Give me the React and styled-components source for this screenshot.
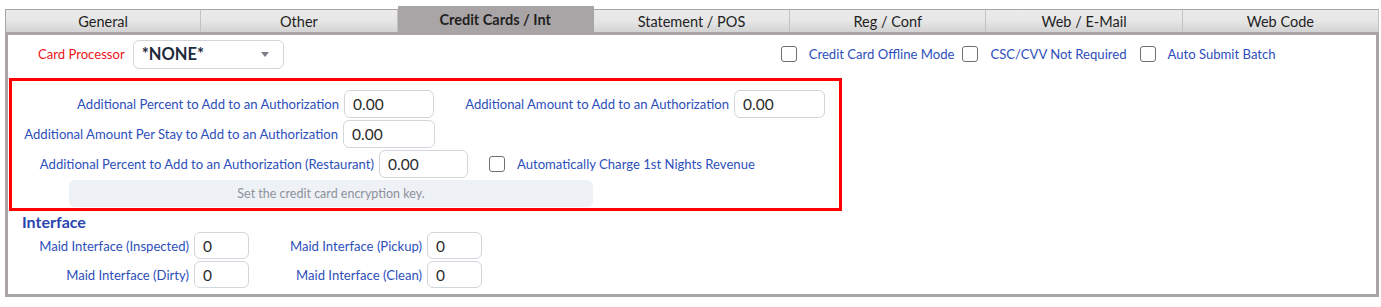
import React from 'react';
import styled, { createGlobalStyle } from 'styled-components';

const GlobalStyle = createGlobalStyle`
  body {
    margin: 0;
    background: #fff;
    font-family: Lato, "Open Sans", sans-serif;
  }
`;

const Page = styled.div`
  width: 1374px;
  padding: 6px 0 0 5px;
`;

const TabBar = styled.div`
  display: grid;
  grid-template-columns: repeat(7, 1fr);
  align-items: end;
  border-bottom: 3px solid #a9a5a6;
`;

const Tab = styled.div`
  display: flex;
  align-items: center;
  justify-content: center;
  height: ${props => (props.active ? '26px' : '23px')};
  border: 1px solid #a9a5a6;
  border-bottom: none;
  border-left: ${props => (props.first ? '1px solid #a9a5a6' : 'none')};
  border-right-color: ${props => (props.active ? '#a9a5a6' : '#c4c1c2')};
  background: ${props =>
    props.active
      ? '#a9a5a6'
      : 'linear-gradient(to bottom, #ebebeb 0%, #e6e6e6 50%, #d3d3d3 100%)'};
  color: #1f1f1f;
  font-size: 14.5px;
  font-weight: ${props => (props.active ? 'bold' : 'normal')};
  box-sizing: border-box;
`;

const Panel = styled.div`
  border: 3px solid #a9a5a6;
  border-top: none;
  height: 262px;
  box-sizing: border-box;
  padding-top: 4px;
`;

const TopRow = styled.div`
  display: flex;
  align-items: center;
  height: 30px;
  padding-left: 30px;
`;

const Label = styled.label`
  display: inline-block;
  width: ${props => (props.width ? `${props.width}px` : 'auto')};
  text-align: right;
  padding-right: ${props => (props.width ? '5px' : '0')};
  box-sizing: border-box;
  font-size: 13.1px;
  color: ${props => (props.red ? '#e8141a' : '#2d4fbb')};
  white-space: nowrap;
`;

const Select = styled.div`
  display: flex;
  align-items: center;
  justify-content: space-between;
  width: 151px;
  height: 29px;
  margin-left: 8px;
  padding: 0 14px 0 8px;
  border: 1px solid #d2d5da;
  border-radius: 6px;
  box-sizing: border-box;
  font-size: 16.5px;
  font-weight: bold;
  color: #1d2a3a;
`;

const Caret = styled.span`
  width: 0;
  height: 0;
  border-left: 4px solid transparent;
  border-right: 4px solid transparent;
  border-top: 5px solid #7a7f87;
`;

const OptionGroup = styled.div`
  display: flex;
  align-items: center;
  margin-left: ${props => props.offset || 0}px;
`;

const Check = styled.span`
  display: inline-block;
  width: 14px;
  height: 14px;
  border: 1.5px solid #6f6f6f;
  border-radius: 3px;
  background: #fff;
  margin-right: 12px;
  margin-left: ${props => props.gap || 0}px;
`;

const Highlight = styled.div`
  margin: 9px 0 0 1px;
  width: 833px;
  height: 133px;
  border: 3px solid #ff0000;
  box-sizing: border-box;
  padding-top: 8px;
`;

const FieldRow = styled.div`
  display: flex;
  align-items: center;
  height: 30px;
`;

const Input = styled.div`
  display: flex;
  align-items: center;
  width: ${props => props.width}px;
  height: ${props => props.height || 28}px;
  padding-left: 8px;
  border: 1px solid #d2d5da;
  border-radius: 6px;
  box-sizing: border-box;
  font-size: 15.5px;
  color: #2b2b2b;
  background: #fff;
`;

const KeyButton = styled.div`
  display: flex;
  align-items: center;
  justify-content: center;
  width: 524px;
  height: 27px;
  margin: 1px 0 0 57px;
  border-radius: 6px;
  background: #eef1f6;
  font-size: 12.5px;
  color: #8d929b;
`;

const Heading = styled.div`
  margin: 2px 0 0 14px;
  font-size: 16px;
  font-weight: bold;
  color: #2a45b0;
  line-height: 18px;
`;

const MaidRow = styled.div`
  display: flex;
  align-items: center;
  height: 29px;
`;

function App() {
  return (
    <>
      <GlobalStyle />
      <Page>
        <TabBar>
          <Tab first>General</Tab>
          <Tab>Other</Tab>
          <Tab active>Credit Cards / Int</Tab>
          <Tab>Statement / POS</Tab>
          <Tab>Reg / Conf</Tab>
          <Tab>Web / E-Mail</Tab>
          <Tab>Web Code</Tab>
        </TabBar>
        <Panel>
          <TopRow>
            <Label red>Card Processor</Label>
            <Select>
              <span>*NONE*</span>
              <Caret />
            </Select>
            <OptionGroup offset={497}>
              <Check />
              <Label>Credit Card Offline Mode</Label>
              <Check gap={8} />
              <Label>CSC/CVV Not Required</Label>
              <Check gap={13} />
              <Label>Auto Submit Batch</Label>
            </OptionGroup>
          </TopRow>
          <Highlight>
            <FieldRow>
              <Label width={332}>Additional Percent to Add to an Authorization</Label>
              <Input width={90}>0.00</Input>
              <Label width={300}>Additional Amount to Add to an Authorization</Label>
              <Input width={91}>0.00</Input>
            </FieldRow>
            <FieldRow>
              <Label width={331}>Additional Amount Per Stay to Add to an Authorization</Label>
              <Input width={92}>0.00</Input>
            </FieldRow>
            <FieldRow>
              <Label width={367}>Additional Percent to Add to an Authorization (Restaurant)</Label>
              <Input width={89}>0.00</Input>
              <Check gap={21} />
              <Label>Automatically Charge 1st Nights Revenue</Label>
            </FieldRow>
            <KeyButton>Set the credit card encryption key.</KeyButton>
          </Highlight>
          <Heading>Interface</Heading>
          <MaidRow>
            <Label width={186}>Maid Interface (Inspected)</Label>
            <Input width={55} height={27}>0</Input>
            <Label width={178}>Maid Interface (Pickup)</Label>
            <Input width={55} height={27}>0</Input>
          </MaidRow>
          <MaidRow>
            <Label width={186}>Maid Interface (Dirty)</Label>
            <Input width={55} height={27}>0</Input>
            <Label width={178}>Maid Interface (Clean)</Label>
            <Input width={55} height={27}>0</Input>
          </MaidRow>
        </Panel>
      </Page>
    </>
  );
}

export default App;
